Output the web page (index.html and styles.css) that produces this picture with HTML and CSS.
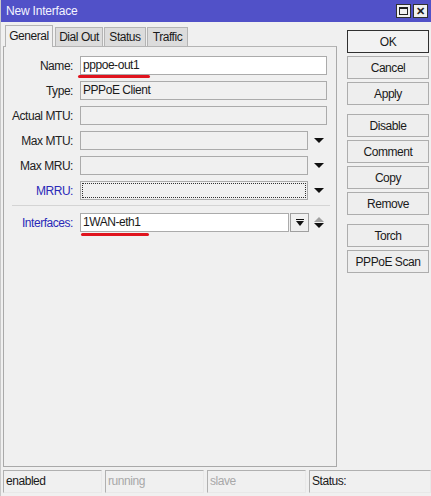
FILE: index.html
```html
<!DOCTYPE html>
<html>
<head>
<meta charset="utf-8">
<title>New Interface</title>
<link rel="stylesheet" href="styles.css">
</head>
<body>
<div class="window">
  <div class="titlebar">
    <span class="title">New Interface</span>
    <div class="tb-buttons">
      <span class="tb-btn"><span class="max-box"></span></span>
      <span class="tb-btn close">✕</span>
    </div>
  </div>
  <div class="main">
    <div class="left">
      <div class="tabs">
        <div class="tab active t-general">General</div>
        <div class="tab t-dial">Dial Out</div>
        <div class="tab t-status">Status</div>
        <div class="tab t-traffic">Traffic</div>
      </div>
      <div class="panel">
        <div class="row">
          <span class="label">Name:</span>
          <div class="field white w-full mark mark-name">pppoe-out1</div>
        </div>
        <div class="row">
          <span class="label">Type:</span>
          <div class="field w-full">PPPoE Client</div>
        </div>
        <div class="row">
          <span class="label">Actual MTU:</span>
          <div class="field w-full"></div>
        </div>
        <div class="row">
          <span class="label">Max MTU:</span>
          <div class="field w-arrow"></div>
          <div class="arrow-cell"><span class="tri-down"></span></div>
        </div>
        <div class="row">
          <span class="label">Max MRU:</span>
          <div class="field w-arrow"></div>
          <div class="arrow-cell"><span class="tri-down"></span></div>
        </div>
        <div class="row">
          <span class="label blue">MRRU:</span>
          <div class="field w-arrow focused"></div>
          <div class="arrow-cell"><span class="tri-down"></span></div>
        </div>
        <div class="separator"></div>
        <div class="row">
          <span class="label blue">Interfaces:</span>
          <div class="field white w-if mark mark-if">1WAN-eth1</div>
          <div class="drop-btn"><span class="bar"></span><span class="tri-down small"></span></div>
          <div class="arrow-cell updown"><span class="tri-up"></span><span class="tri-down"></span></div>
        </div>
      </div>
    </div>
    <div class="buttons">
      <div class="group">
        <div class="btn default">OK</div>
        <div class="btn">Cancel</div>
        <div class="btn">Apply</div>
      </div>
      <div class="group">
        <div class="btn">Disable</div>
        <div class="btn">Comment</div>
        <div class="btn">Copy</div>
        <div class="btn">Remove</div>
      </div>
      <div class="group">
        <div class="btn">Torch</div>
        <div class="btn">PPPoE Scan</div>
      </div>
    </div>
  </div>
  <div class="statusbar">
    <div class="cell">enabled</div>
    <div class="cell dim">running</div>
    <div class="cell dim">slave</div>
    <div class="cell last">Status:</div>
  </div>
</div>
</body>
</html>
```

FILE: styles.css
```css
* { box-sizing: border-box; }
html, body {
  margin: 0;
  padding: 0;
  background: #f0f0f0;
}
body {
  font-family: "Liberation Sans", Arial, sans-serif;
  font-size: 12px;
  letter-spacing: -0.45px;
  color: #1a1a1a;
}
.window {
  width: 431px;
  height: 496px;
  display: flex;
  flex-direction: column;
  border-left: 1px solid #c8c8c8;
}
.titlebar {
  height: 22px;
  background: #5151c8;
  display: flex;
  align-items: center;
  justify-content: space-between;
  padding: 0 3px 0 5px;
  color: #f4f4ff;
  font-size: 12px;
  letter-spacing: -0.2px;
}
.tb-buttons {
  display: flex;
  gap: 2px;
}
.tb-btn {
  width: 15px;
  height: 14px;
  background: #f0f0f0;
  border: 1px solid #303030;
  display: flex;
  align-items: center;
  justify-content: center;
  color: #202020;
  font-size: 11px;
  font-weight: bold;
  line-height: 1;
  letter-spacing: 0;
}
.max-box {
  width: 9px;
  height: 8px;
  border: 1px solid #202020;
  border-top-width: 2px;
}
.main {
  flex: 1;
  display: flex;
  padding-top: 3px;
}
.left {
  margin-left: 2px;
  width: 334px;
  display: flex;
  flex-direction: column;
}
.tabs {
  height: 21px;
  display: flex;
  align-items: flex-end;
  padding-left: 2px;
  position: relative;
  z-index: 1;
}
.tab {
  height: 19px;
  line-height: 18px;
  text-align: center;
  border: 1px solid #b4b4b4;
  border-bottom: none;
  background: #dcdcdc;
  margin-right: 1px;
}
.tab.active {
  height: 22px;
  line-height: 20px;
  background: #f0f0f0;
  margin-bottom: -1px;
  margin-right: 2px;
}
.t-general { width: 48px; }
.t-dial { width: 48px; }
.t-status { width: 42px; }
.t-traffic { width: 41px; }
.panel {
  flex: 1;
  border: 1px solid #a9a9a9;
  border-top-color: #b4b4b4;
  padding-top: 9px;
}
.row {
  display: flex;
  align-items: center;
  height: 19px;
  margin-bottom: 6px;
}
.label {
  width: 69px;
  text-align: right;
  margin-right: 7px;
  color: #222;
  white-space: nowrap;
}
.label.blue {
  color: #2a2ab8;
}
.field {
  height: 19px;
  border: 1px solid #ababab;
  background: #f0f0f0;
  padding-left: 2px;
  line-height: 17px;
  color: #1a1a1a;
  font-size: 12px;
}
.field.white {
  background: #ffffff;
}
.w-full { width: 247px; }
.w-arrow { width: 228px; }
.w-if { width: 209px; }
.focused {
  outline: 1px dotted #303030;
  outline-offset: -3px;
}
.mark {
  position: relative;
}
.mark::after {
  content: "";
  position: absolute;
  height: 3px;
  background: #e0141e;
  border-radius: 2px;
}
.mark-name::after {
  left: -3px;
  top: 18px;
  width: 72px;
}
.mark-if::after {
  left: 0;
  top: 19px;
  width: 68px;
}
.arrow-cell {
  width: 21px;
  height: 19px;
  display: flex;
  flex-direction: column;
  align-items: center;
  justify-content: center;
}
.updown {
  gap: 1px;
  width: 19px;
}
.tri-down {
  width: 0;
  height: 0;
  border-left: 5px solid transparent;
  border-right: 5px solid transparent;
  border-top: 5px solid #111;
}
.tri-down.small {
  border-left-width: 4px;
  border-right-width: 4px;
  border-top-width: 5px;
}
.tri-up {
  width: 0;
  height: 0;
  border-left: 5px solid transparent;
  border-right: 5px solid transparent;
  border-bottom: 5px solid #a0a0a0;
}
.drop-btn {
  width: 19px;
  height: 19px;
  margin-left: 1px;
  border: 1px solid #a0a0a0;
  background: #f0f0f0;
  display: flex;
  flex-direction: column;
  align-items: center;
  justify-content: center;
  gap: 1px;
}
.drop-btn .bar {
  width: 8px;
  height: 1px;
  background: #111;
}
.separator {
  height: 1px;
  background: #d4d4d4;
  margin: -1px 6px 7px 8px;
}
.buttons {
  margin-left: 10px;
  width: 82px;
  padding-top: 5px;
  display: flex;
  flex-direction: column;
  gap: 9px;
}
.group {
  display: flex;
  flex-direction: column;
  gap: 3px;
}
.btn {
  height: 23px;
  border: 1px solid #adadad;
  background: #eeeeee;
  display: flex;
  align-items: center;
  justify-content: center;
  color: #1a1a1a;
  font-size: 12px;
}
.btn.default {
  border-color: #303030;
  background: #f2f2f2;
}
.statusbar {
  height: 23px;
  margin: 3px 0 3px 0;
  padding-left: 2px;
  display: flex;
  gap: 3px;
}
.cell {
  width: 99px;
  height: 23px;
  border: 1px solid #b0b0b0;
  border-bottom-color: #e8e8e8;
  border-right-color: #e8e8e8;
  padding-left: 2px;
  line-height: 21px;
  color: #1a1a1a;
}
.cell.dim {
  color: #a8a8a8;
}
.cell.last {
  flex: 1;
}
```
